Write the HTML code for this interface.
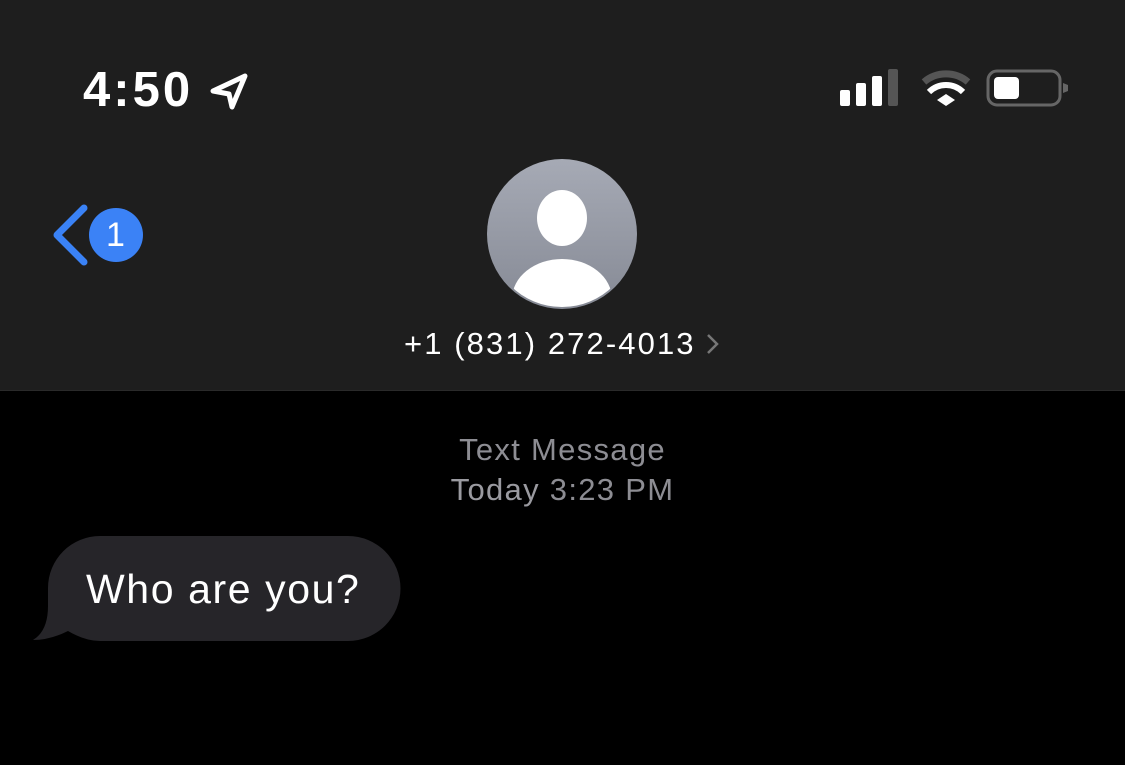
<!DOCTYPE html>
<html><head><style>
body{margin:0;width:1125px;height:765px;background:#000;overflow:hidden;position:relative;font-family:"Liberation Sans",sans-serif}
.hdr{position:absolute;left:0;top:0;width:1125px;height:390px;background:#1e1e1e;border-bottom:1px solid #2a2a2a}
.t{position:absolute;color:#fff;white-space:nowrap}
</style></head><body>
<div class="hdr"></div>
<div class="t" style="left:83px;top:62px;font-size:49px;font-weight:bold;letter-spacing:3px">4:50</div>
<svg style="position:absolute;left:205px;top:68px" width="46" height="44" viewBox="0 0 46 44"><path d="M8 23 L40 8 L27 39 L24 26 Z" fill="none" stroke="#fff" stroke-width="5" stroke-linejoin="round"/></svg>
<svg style="position:absolute;left:838px;top:68px" width="240" height="42">
<rect x="2" y="22" width="10" height="16" rx="2" fill="#fff"/>
<rect x="18" y="15" width="10" height="23" rx="2" fill="#fff"/>
<rect x="34" y="8" width="10" height="30" rx="2" fill="#fff"/>
<rect x="50" y="1" width="10" height="37" rx="2" fill="#555"/>
<path d="M86 14 A34 34 0 0 1 130 14" fill="none" stroke="#555" stroke-width="7"/>
<path d="M91 24 A24 24 0 0 1 125 24" fill="none" stroke="#fff" stroke-width="6"/>
<path d="M99 32 L108 26 L117 32 L108 38 Z" fill="#fff"/>
<rect x="150" y="3" width="72" height="34" rx="9" fill="none" stroke="#666" stroke-width="3"/>
<rect x="156" y="9" width="25" height="22" rx="4" fill="#fff"/>
<path d="M225 15 L230 17 L230 23 L225 25 Z" fill="#666"/>
</svg>
<svg style="position:absolute;left:48px;top:200px" width="100" height="70"><path d="M36 8 L9 35 L36 62" fill="none" stroke="#3a82f6" stroke-width="7" stroke-linecap="round" stroke-linejoin="round"/><circle cx="68" cy="35" r="27" fill="#3b82f6"/></svg>
<div class="t" style="left:106px;top:216px;font-size:34px">1</div>
<svg style="position:absolute;left:487px;top:159px" width="150" height="150"><defs><linearGradient id="g" x1="0" y1="0" x2="0" y2="1"><stop offset="0" stop-color="#a6aab5"/><stop offset="1" stop-color="#868a95"/></linearGradient><clipPath id="c"><circle cx="75" cy="75" r="73"/></clipPath></defs><circle cx="75" cy="75" r="75" fill="url(#g)"/><ellipse cx="75" cy="59" rx="25" ry="28" fill="#fff"/><ellipse cx="75" cy="140" rx="50" ry="40" fill="#fff" clip-path="url(#c)"/></svg>
<div class="t" style="left:404px;top:326px;font-size:31px;letter-spacing:2.1px">+1 (831) 272-4013</div>
<svg style="position:absolute;left:705px;top:333px" width="16" height="22"><path d="M3 2 L12 11 L3 20" fill="none" stroke="#777" stroke-width="2.5"/></svg>
<div class="t" style="left:0;width:1125px;text-align:center;top:432px;font-size:31px;color:#8d8d93;letter-spacing:1.3px">Text Message</div>
<div class="t" style="left:0;width:1125px;text-align:center;top:472px;font-size:31px;color:#8d8d93;letter-spacing:1.3px"><span style="color:#9a9aa0">Today</span> 3:23 PM</div>
<svg style="position:absolute;left:30px;top:536px" width="372" height="106"><path d="M70 0 H318 A52 52 0 0 1 318 105 H70 Q55 105 38 95 Q20 104 3 104 Q18 95 18 70 V52 A52 52 0 0 1 70 0Z" fill="#262529"/></svg>
<div class="t" style="left:86px;top:566px;font-size:41px;letter-spacing:1.6px">Who are you?</div>
</body></html>
